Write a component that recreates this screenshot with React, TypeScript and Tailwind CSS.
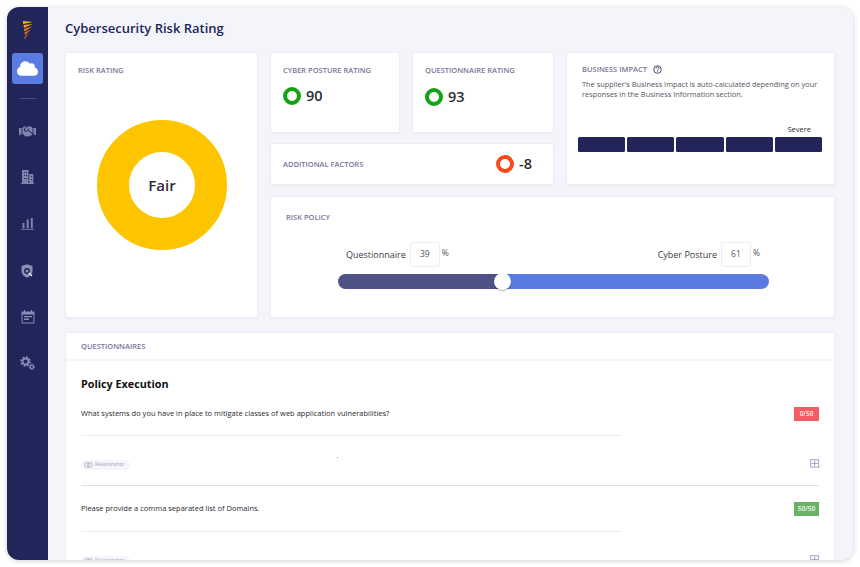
import { FaCloud, FaHandshake } from "react-icons/fa";

const font = { fontFamily: '"Open Sans", "Noto Sans", sans-serif' };

function Label({ children }: { children: React.ReactNode }) {
  return <div className="text-[7.5px] leading-[11px] font-semibold text-[#74749a] uppercase">{children}</div>;
}

function Ring({ color }: { color: string }) {
  return <span className="block w-[18px] h-[18px] rounded-full border-[4px] bg-white shrink-0" style={{ borderColor: color }} />;
}

function Score({ color, value }: { color: string; value: string }) {
  return (
    <div className="flex items-center gap-[5px]">
      <Ring color={color} />
      <span className="text-[14.5px] leading-[20px] font-semibold text-[#2d2d33]">{value}</span>
    </div>
  );
}

function Card({ className, children }: { className: string; children: React.ReactNode }) {
  return <div className={`bg-white border border-[#eceef4] rounded-[2px] shadow-[0_1px_2px_rgba(40,40,90,0.05)] ${className}`}>{children}</div>;
}

function Logo() {
  return (
    <svg width="12" height="20" viewBox="0 0 12 20">
      <path d="M1 1 L11 2 L1 4 Z" fill="#f2b705" />
      <path d="M1.5 5 L11 4 L2 8 Z" fill="#f0a30a" />
      <path d="M2 9 L10.5 6.5 L2.5 11.5 Z" fill="#ee8a12" />
      <path d="M2.5 12.5 L9 9.5 L3 15 Z" fill="#e86f17" />
      <path d="M3 16 L7 13 L2 20 Z" fill="#d9541a" />
    </svg>
  );
}

function Building() {
  return (
    <svg width="13" height="14" viewBox="0 0 13 14" fill="#7f82ad">
      <path d="M1 0h6.5v13H1z" />
      <path d="M8.3 4H12.3v9H8.3z" />
      <path d="M0 13h13v1H0z" />
      <path d="M3 2h1v1H3zM5 2h1v1H5zM3 5h1v1H3zM5 5h1v1H5zM3 8h1v1H3zM5 8h1v1H5zM10 6h1v1h-1zM10 9h1v1h-1z" fill="#21255a" />
    </svg>
  );
}

function Bars() {
  return (
    <svg width="13" height="13" viewBox="0 0 13 13" fill="#7f82ad">
      <path d="M1.5 6h2v5.5h-2zM5.7 2.500h2v9h-2zM9.800 1h2v10.500h-2z" />
      <path d="M0 12.200h13v.8H0z" />
    </svg>
  );
}

function Shield() {
  return (
    <svg width="13" height="14" viewBox="0 0 13 14">
      <path d="M6 0.300 L11.500 2 V7 C11.500 10.300 9 12.600 6 13.600 C3 12.600 .5 10.300 .5 7 V2 Z" fill="#8a8db5" />
      <circle cx="6" cy="7" r="2.300" fill="none" stroke="#21255a" strokeWidth="1.400" />
      <path d="M7.800 8.800 L11 12" stroke="#fff" strokeWidth="1.100" />
    </svg>
  );
}

function Calendar() {
  return (
    <svg width="14" height="14" viewBox="0 0 14 14">
      <rect x="0.500" y="1.500" width="13" height="12" rx="1" fill="#8a8db5" />
      <path d="M3 0h1v2H3zM10 0h1v2h-1z" fill="#8a8db5" />
      <rect x="1.500" y="4.500" width="11" height="8" fill="#21255a" />
      <path d="M3 6h8v1.300H3zM3 8.600h5v1.300H3z" fill="#8a8db5" />
    </svg>
  );
}

function Gears() {
  return (
    <svg width="15" height="14" viewBox="0 0 15 14" fill="none" stroke="#8a8db5">
      <circle cx="5.500" cy="5.500" r="3" strokeWidth="1.800" />
      <circle cx="5.500" cy="5.500" r="4.500" strokeWidth="1.600" strokeDasharray="1.800 1.730" />
      <circle cx="11.800" cy="10.800" r="1.700" strokeWidth="1.200" />
      <circle cx="11.800" cy="10.800" r="2.700" strokeWidth="1" strokeDasharray="1.200 1.030" />
    </svg>
  );
}

function Plus() {
  return (
    <svg className="-mr-[1px] -mt-[2px]" width="10" height="10" viewBox="0 0 10 10" fill="none" stroke="#9a9cc0" strokeWidth="0.9">
      <rect x="0.700" y="0.700" width="8" height="7.400" />
      <path d="M4.700 1.500v6M1.500 4.400h6.400M9 8.200v1" />
    </svg>
  );
}

function Chip() {
  return (
    <span className="flex items-center gap-[2px] h-[10px] w-[49px] pl-[3px] rounded-full bg-[#f5f6fa] text-[5px] text-[#a0a2ba]">
      <svg width="9" height="6" viewBox="0 0 9 6" fill="none" stroke="#a0a2ba" strokeWidth="0.700">
        <circle cx="3" cy="3" r="2.400" />
        <circle cx="6" cy="3" r="2.400" />
      </svg>
      Relationship
    </span>
  );
}

function Question({ text, badge, color, first }: { text: string; badge: string; color: string; first?: boolean }) {
  return (
    <div className={`relative ${first ? "h-[77px]" : "h-[100px] border-t border-[#dcdbe8]"}`}>
      <div className={`flex items-start justify-between ${first ? "pt-0" : "pt-[17px]"}`}>
        <span className="text-[7.5px] leading-[11px] text-[#2a2a30]">{text}</span>
        <span className="w-[25px] h-[14px] flex items-center justify-center text-[6.500px] font-semibold text-white/90 -mt-[1px]" style={{ backgroundColor: color }}>
          {badge}
        </span>
      </div>
      <div className={`w-[540px] h-px bg-[#ececf1] ${first ? "mt-[14px]" : "mt-[15px]"}`} />
      <div className="flex items-center justify-between mt-[24px]">
        <Chip />
        <Plus />
      </div>
      {first && <span className="absolute left-[256px] top-[49px] w-px h-px bg-[#9a9aa8]" />}
    </div>
  );
}

export default function App() {
  return (
    <div className="w-[860px] h-[567px] bg-white p-[7px] pb-[7px] overflow-hidden" style={font}>
      <div className="w-[846px] h-[553px] flex rounded-[12px] overflow-hidden bg-[#f4f5fa] shadow-[0_1px_5px_rgba(40,40,90,0.22)]">
        <aside className="w-[41px] shrink-0 bg-[#21255a] flex flex-col items-center pt-[13px]">
          <Logo />
          <div className="mt-[13px] w-[31px] h-[31px] rounded-[3px] bg-[#5a7ce2] flex items-center justify-center">
            <FaCloud className="text-white w-[21px] h-[21px]" />
          </div>
          <div className="mt-[14px] w-[16px] h-px bg-[#4a4d7e]" />
          <FaHandshake className="mt-[24px] text-[#8285b0] w-[17px] h-[17px]" />
          <div className="mt-[30px]"><Building /></div>
          <div className="mt-[33px]"><Bars /></div>
          <div className="mt-[34px]"><Shield /></div>
          <div className="mt-[32px]"><Calendar /></div>
          <div className="mt-[32px]"><Gears /></div>
        </aside>
        <main className="flex-1 pl-[17px] pr-[18px] pt-[12px] overflow-hidden">
          <h1 className="text-[13px] leading-[19px] font-semibold text-[#21255a]">Cybersecurity Risk Rating</h1>
          <div className="mt-[14px] flex gap-[12px] h-[266px]">
            <Card className="w-[193px] pt-[12px] pl-[12px] shrink-0">
              <Label>Risk Rating</Label>
              <div className="mt-[44px] ml-[19px] w-[130px] h-[130px] rounded-full border-[32px] border-[#fdc500] bg-white flex items-center justify-center">
                <span className="text-[15px] font-semibold text-[#2d2d33]">Fair</span>
              </div>
            </Card>
            <div className="flex-1 flex flex-col gap-[11px]">
              <div className="flex gap-[12px] h-[133px]">
                <div className="w-[284px] flex flex-col gap-[10px] shrink-0">
                  <div className="flex gap-[12px] h-[81px]">
                    <Card className="w-[130px] pt-[12px] pl-[12px]">
                      <Label>Cyber Posture Rating</Label>
                      <div className="mt-[10px]"><Score color="#12a312" value="90" /></div>
                    </Card>
                    <Card className="w-[142px] pt-[12px] pl-[12px]">
                      <Label>Questionnaire Rating</Label>
                      <div className="mt-[11px]"><Score color="#12a312" value="93" /></div>
                    </Card>
                  </div>
                  <Card className="h-[42px] pl-[12px] pr-[21px] flex items-center justify-between">
                    <Label>Additional Factors</Label>
                    <Score color="#fa4a1c" value="-8" />
                  </Card>
                </div>
                <Card className="flex-1 pt-[11px] pl-[15px]">
                  <div className="flex items-center gap-[6px]">
                    <Label>Business Impact</Label>
                    <svg width="9" height="9" viewBox="0 0 9 9" fill="none" stroke="#3a3a70" strokeWidth="0.900">
                      <circle cx="4.500" cy="4.500" r="3.800" />
                      <path d="M3 3.500c0-2 3-2 3 0 0 1-1.500 1-1.500 2M4.500 6.300v.8" />
                    </svg>
                  </div>
                  <p className="mt-[4px] text-[7.400px] leading-[10px] text-[#55555e] w-[245px]">
                    The supplier's Business Impact is auto-calculated depending on your responses in the Business Information section.
                  </p>
                  <div className="-ml-[4px] mt-[25px] text-[7.500px] leading-[11px] text-[#2a2a30] w-[244px] text-right pr-[11px]">Severe</div>
                  <div className="-ml-[4px] mt-[2px] flex gap-[2px] w-[244px]">
                    {[0, 1, 2, 3, 4].map((i) => (
                      <div key={i} className="flex-1 h-[15px] rounded-[1.500px] bg-[#21255a]" />
                    ))}
                  </div>
                </Card>
              </div>
              <Card className="flex-1 pt-[15px] pl-[15px]">
                <Label>Risk Policy</Label>
                <div className="ml-[52px] w-[431px] mt-[19px]">
                  <div className="flex items-center justify-between pr-[9px] pl-[8px]">
                    <div className="flex items-center">
                      <span className="text-[9px] text-[#3a3a40] mr-[4px]">Questionnaire</span>
                      <span className="w-[30px] h-[25px] border border-[#eceef2] rounded-[2px] flex items-center justify-center text-[8.500px] text-[#55555e]">39</span>
                      <span className="text-[8.500px] text-[#55555e] -mt-[3px] ml-[2px]">%</span>
                    </div>
                    <div className="flex items-center">
                      <span className="text-[9px] text-[#3a3a40] mr-[4px]">Cyber Posture</span>
                      <span className="w-[30px] h-[25px] border border-[#eceef2] rounded-[2px] flex items-center justify-center text-[8.500px] text-[#55555e]">61</span>
                      <span className="text-[8.500px] text-[#55555e] -mt-[3px] ml-[2px]">%</span>
                    </div>
                  </div>
                  <div className="relative mt-[7px] h-[15px] rounded-full overflow-visible flex">
                    <div className="w-[165px] rounded-l-full bg-[#4f5285]" />
                    <div className="flex-1 rounded-r-full bg-[#5a7ce2]" />
                    <div className="absolute left-[156px] top-[-1px] w-[17px] h-[17px] rounded-full bg-white shadow-[0_1px_2px_rgba(0,0,0,0.3)]" />
                  </div>
                </div>
              </Card>
            </div>
          </div>
          <div className="mt-[14px] bg-white border border-[#eceef4] rounded-[2px] overflow-hidden h-[300px]">
            <div className="h-[28px] pl-[15px] pt-[1px] flex items-center border-b-2 border-[#f4f5fa]">
              <Label>Questionnaires</Label>
            </div>
            <div className="pl-[15px] pr-[15px] pt-[14px]">
              <h2 className="text-[10.800px] leading-[17px] font-bold text-[#111] mb-[16px]">Policy Execution</h2>
              <Question first text="What systems do you have in place to mitigate classes of web application vulnerabilities?" badge="0/50" color="#f25c62" />
              <Question text="Please provide a comma separated list of Domains." badge="50/50" color="#69b266" />
            </div>
          </div>
        </main>
      </div>
    </div>
  );
}
